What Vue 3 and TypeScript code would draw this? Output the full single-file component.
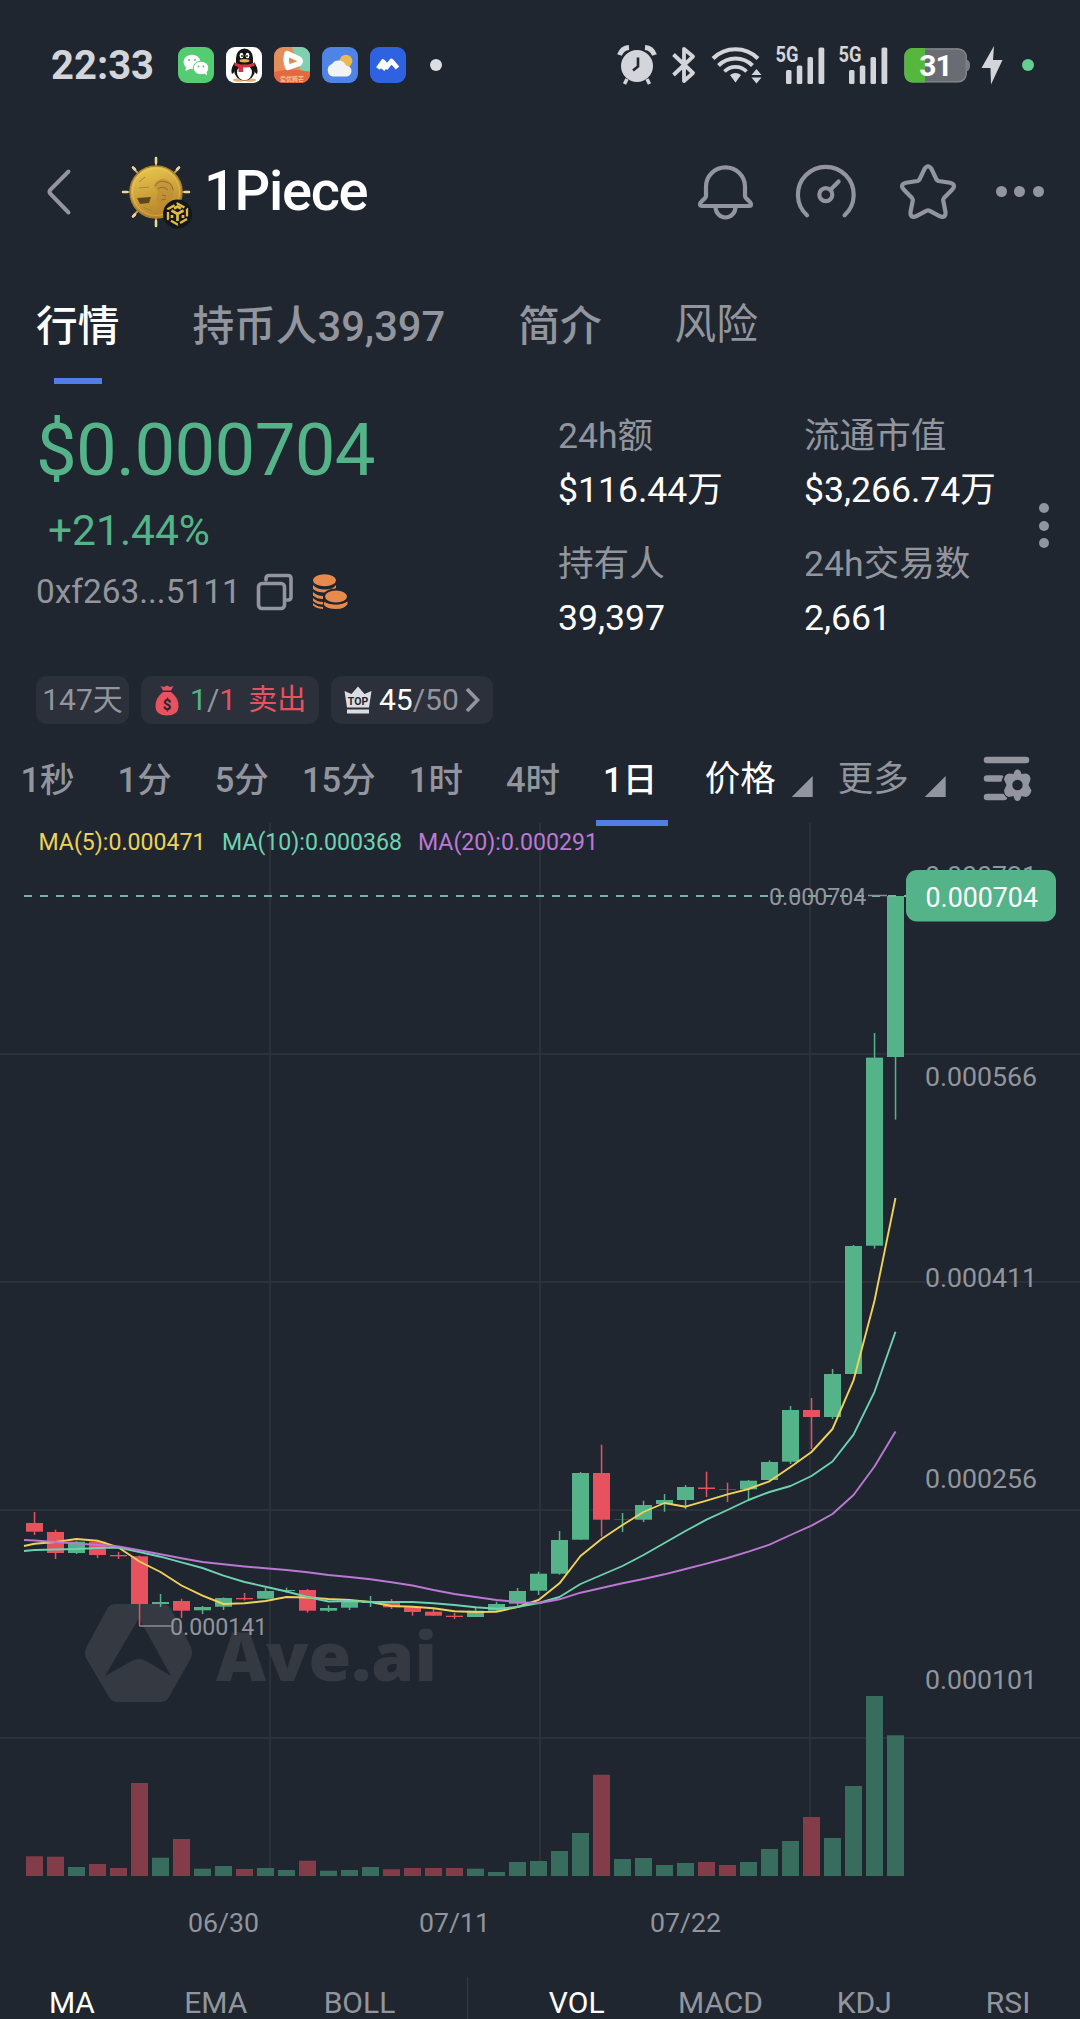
<template>
  <div class="page">
    <!-- 系统状态栏 -->
    <div class="status-bar">
      <span class="clock">22:33</span>
      <div class="app-icons">
        <svg viewBox="0 0 36 36">
          <rect width="36" height="36" rx="9" fill="#54cc71" />
          <ellipse cx="14" cy="15" rx="8.5" ry="7.3" fill="#fff" />
          <path d="M8 19 L7.5 24 L13 21.500Z" fill="#fff" />
          <ellipse cx="23" cy="21" rx="7.8" ry="6.800" fill="#fff" stroke="#54cc71" stroke-width="1" />
          <path d="M26 26 L29 28.500 L28.500 24Z" fill="#fff" />
          <g fill="#54cc71">
            <circle cx="11" cy="13" r="1.100" />
            <circle cx="17" cy="13" r="1.100" />
            <circle cx="20.500" cy="19.500" r="1" />
            <circle cx="25.500" cy="19.500" r="1" />
          </g>
        </svg>
        <svg viewBox="0 0 36 36">
          <rect width="36" height="36" rx="9" fill="#fff" />
          <ellipse cx="13" cy="33" rx="6" ry="1.800" fill="#e5b070" />
          <ellipse cx="24" cy="33" rx="6" ry="1.800" fill="#e5b070" />
          <path d="M9 15 Q4 22 6 27 Q8 26 9 23Z M28 15 Q33 22 31 27 Q29 26 28 23Z" fill="#151515" />
          <ellipse cx="18.500" cy="23" rx="10.500" ry="10.500" fill="#151515" />
          <ellipse cx="18.500" cy="25.500" rx="7.500" ry="7.800" fill="#fff" />
          <path d="M10 16 V11 a8.500 9.500 0 0 1 17 0 V16Z" fill="#151515" />
          <ellipse cx="15.500" cy="8.500" rx="1.900" ry="2.700" fill="#fff" />
          <ellipse cx="21.500" cy="8.500" rx="1.900" ry="2.700" fill="#fff" />
          <circle cx="16" cy="9" r="0.900" fill="#151515" />
          <circle cx="21" cy="9" r="0.900" fill="#151515" />
          <ellipse cx="18.500" cy="13.700" rx="5" ry="1.700" fill="#e6ad55" />
          <path d="M8.500 15.500 Q18.500 20 28.500 15.500 V19 Q22 21 17 20.500 V25 H12.500 V20 L8.500 18.500Z" fill="#d4343f" />
        </svg>
        <svg viewBox="0 0 36 36">
          <rect width="36" height="36" rx="9" fill="#e48f59" />
          <path d="M18 0 H27 a9 9 0 0 1 9 9 V24 H27 Z" fill="#7ed0b0" />
          <path d="M0 25 Q18 20 36 25 V27 a9 9 0 0 1 -9 9 H9 a9 9 0 0 1 -9 -9Z" fill="#e56840" />
          <path d="M13 6.500 L25 12 Q27.500 14 25 16.500 L14 20.500 Q11 14 13 6.500Z" fill="#e08a4b" stroke="#fff" stroke-width="5.500" stroke-linejoin="round" />
          <text x="18" y="33.500" class="mini-text">爱优腾芒</text>
        </svg>
        <svg viewBox="0 0 36 36">
          <rect width="36" height="36" rx="9" fill="#4f83e6" />
          <circle cx="24" cy="14" r="6.300" fill="#eab951" />
          <path d="M11 29.500 a6.500 6.500 0 0 1 -1 -12.500 a8 8 0 0 1 14 1.500 a5.500 5.500 0 0 1 0 11Z" fill="#f2f3f5" />
        </svg>
        <svg viewBox="0 0 36 36">
          <rect width="36" height="36" rx="9" fill="#2f62e0" />
          <path d="M8 21.500 L13 14.500 L16 18 L12.500 22.500 M15.500 21.500 L21.500 14 L27.500 21" fill="none" stroke="#fff" stroke-width="4.600" stroke-linejoin="round" />
        </svg>
      </div>
      <span class="dot"></span>
      <div class="sys-icons">
        <svg class="alarm" viewBox="0 0 38 40">
          <circle cx="19" cy="21" r="16" fill="#d3d5da" />
          <path d="M1.500 10 Q4 3 11 2.500 M36.500 10 Q34 3 27 2.500" fill="none" stroke="#d3d5da" stroke-width="5" />
          <path d="M9 34 L6.500 39 M29 34 L31.500 39" stroke="#d3d5da" stroke-width="3.500" />
          <path d="M20 12.500 V21.500 L15 25.500" fill="none" stroke="#20262f" stroke-width="2.600" />
        </svg>
        <svg class="bluetooth" viewBox="0 0 24 40">
          <path d="M1.500 9.500 L21 28 L12 36 V4 L21 11.500 L1.500 30" fill="none" stroke="#d3d5da" stroke-width="3.800" stroke-linejoin="round" />
        </svg>
        <svg class="wifi" viewBox="0 0 52 40">
          <path d="M2 13.500 A32 32 0 0 1 47 13.500 M7.500 20.500 A24 24 0 0 1 41.500 20.500 M13.500 26.500 A15.500 15.500 0 0 1 35.500 26.500" fill="none" stroke="#d3d5da" stroke-width="3.900" />
          <path d="M19 30 Q24.500 26 30 30 L24.500 37.500Z" fill="#d3d5da" />
          <path d="M40.500 30 L45.500 24 L50.500 30Z M40.500 32.500 L45.500 38.500 L50.500 32.500Z" fill="#d3d5da" />
        </svg>
        <svg v-for="n in 2" :key="n" class="signal" viewBox="0 0 50 40">
          <text x="-0.500" y="17" class="net-text" textLength="23" lengthAdjust="spacingAndGlyphs">5G</text>
          <g fill="#d3d5da">
            <rect x="10" y="25" width="5.500" height="14" rx="1.500" />
            <rect x="20.800" y="20.500" width="5.500" height="18.500" rx="1.500" />
            <rect x="31.500" y="12" width="5.500" height="27" rx="1.500" />
            <rect x="42.500" y="2.500" width="5.800" height="36.500" rx="1.500" />
          </g>
        </svg>
        <svg class="battery" viewBox="0 0 67 36">
          <rect x="0.800" y="1.800" width="61.500" height="33" rx="8" fill="#6a6c74" stroke="#8b8d94" stroke-width="1.200" />
          <path d="M21 1 V35.500 H8.500 a8 8 0 0 1 -8 -8 V9 a8 8 0 0 1 8 -8Z" fill="#55b83c" />
          <path d="M62.500 12.500 q3.500 1 3.500 6 t-3.500 6Z" fill="#7b7d84" />
          <text x="31.500" y="29" class="battery-text">31</text>
        </svg>
        <svg class="bolt" viewBox="0 0 22 40">
          <path d="M13 1 L0.500 23 H9.500 L10 39.500 L21.500 15 H12Z" fill="#d3d5da" />
        </svg>
        <span class="dot green"></span>
      </div>
    </div>

    <!-- 标题栏 -->
    <header class="header">
      <svg class="back" viewBox="0 0 26 46">
        <path d="M22.500 2.500 L4.500 20.500 Q2.500 22.800 4.500 25 L22.500 43.500" fill="none" stroke="#92959d" stroke-width="4" stroke-linecap="round" />
      </svg>
      <svg class="coin" viewBox="0 0 72 74">
        <defs>
          <linearGradient id="gold" x1="0" y1="0" x2="0.300" y2="1">
            <stop offset="0" stop-color="#ebcd50" />
            <stop offset="1" stop-color="#b9862b" />
          </linearGradient>
        </defs>
        <path d="M35 4 V70 M3 37 H67 M13 14 L57 60 M57 14 L13 60" stroke="#c79d4a" stroke-width="2" />
        <path d="M35 3 V8 M35 66 V71 M2 37 H6 M64 37 H68 M12 12.500 L14 14.500 M58 12.500 L56 14.500 M12 61.500 L14 59.500" stroke="#e8d8a4" stroke-width="2.600" stroke-linecap="round" />
        <circle cx="35" cy="37" r="26" fill="url(#gold)" stroke="#a97f31" stroke-width="1.500" />
        <circle cx="35" cy="37" r="23.500" fill="none" stroke="#f0d77a" stroke-width="0.800" opacity="0.500" />
        <path d="M33 30 Q38 21 47 25 Q55 30 52 42 L47 47 L50 53 L34 60 L38 51 L35 44 L37 37Z" fill="#b98837" opacity="0.550" />
        <path d="M34 31 Q38 24 45 27 Q51 28 52 35 M37 34 q5 -4 10 1 M41 40 l4 1 M40 45 l5 -1" fill="none" stroke="#84602a" stroke-width="1" opacity="0.800" />
        <path d="M16 43 L30 42 L28 48 L19 49Z" fill="#5f461f" />
        <path d="M18 27 l6 -5 M18 33 l10 -1 M22 52 l9 4" fill="none" stroke="#aa8335" stroke-width="1" />
        <circle cx="56.500" cy="59" r="14.500" fill="#13161b" />
        <path d="M56.500 48.500 L66 54 V64 L56.500 69.500 L47 64 V54Z" fill="none" stroke="#e3bd41" stroke-width="2.300" stroke-dasharray="8 2.500" />
        <path d="M50.500 55.500 L56.500 59 L62.500 55.500 M56.500 59 V66 M51 60 V63 M62 60 V63 M53 53.500 L56.500 51.500 L60 53.500" fill="none" stroke="#e3bd41" stroke-width="2.700" />
      </svg>
      <h1 class="title">1Piece</h1>
      <div class="actions">
        <svg class="bell" viewBox="0 0 58 60">
          <path d="M10 24.500 a19.500 19.200 0 0 1 39 0 V34 c0 3 6 5 6 8.500 q0 1.500 -2 1.500 H6 q-2 0 -2 -1.500 c0 -3.500 6 -5.500 6 -8.500Z" />
          <path d="M19.500 45 a10 10.500 0 0 0 20 0" />
        </svg>
        <svg class="gauge" viewBox="0 0 64 60">
          <path d="M13 53.300 A27.900 27.900 0 1 1 50.600 53.300" />
          <circle cx="31.800" cy="32.700" r="6.500" />
          <path d="M37 27.300 L44.600 19.600" />
        </svg>
        <svg class="star" viewBox="0 0 60 60">
          <path d="M26.500 7 Q30 1.500 33.500 7 L38.500 17.500 Q39 18.500 40.500 19 L52 20.800 Q58.500 22.500 54.300 27.500 L46 36 Q45 37.200 45.200 38.500 L47.500 50 Q47.800 56.500 42 54.300 L31.300 48.600 Q30 48 28.700 48.600 L18 54.300 Q12.200 56.500 12.500 50 L14.800 38.500 Q15 37.200 14 36 L5.700 27.500 Q1.500 22.500 8 20.800 L19.500 19 Q21 18.500 21.500 17.500Z" />
        </svg>
        <div class="more">
          <i></i>
          <i></i>
          <i></i>
        </div>
      </div>
    </header>

    <nav class="tabs">
      <span
        v-for="(tab, index) in tabs"
        :key="tab"
        class="tab"
        :class="{ active: index === 0, light: index === 3 }"
      >{{ tab }}</span>
    </nav>

    <!-- 价格概览 -->
    <section class="summary">
      <div class="quote">
        <div class="price">$0.000704</div>
        <div class="change">+21.44%</div>
        <div class="address">
          <span class="hash">0xf263...5111</span>
          <svg class="copy" viewBox="0 0 38 38">
            <rect x="2.500" y="10.500" width="26" height="25" rx="3.500" />
            <path d="M10 7 V5.500 q0 -3 3 -3 H32 q3 0 3 3 V24 q0 3 -3 3 H31" />
          </svg>
          <svg class="stack" viewBox="0 0 35 35">
            <g fill="#e78b4d">
              <path d="M0 11 Q4 15.500 12 15.500 Q20 15.500 23 11 V14 Q18 18.500 12 18.500 Q4 18.500 0 15Z" />
              <path d="M0 18 Q4 22 10 22 V25 Q4 25 0 21.500Z" />
              <path d="M0 24 Q4 28 10 28 V30.500 Q4 30.500 0 27Z M0 29 Q4 33 10 33 V35 Q3 34.500 0 31.500Z" />
              <ellipse cx="11.500" cy="6.300" rx="11.500" ry="6" />
              <path d="M11 28 Q16 30.500 23 30.500 Q30 30.500 34.500 27.500 V30 Q32 35 23 35 Q14 35 11 31Z" />
              <ellipse cx="23" cy="22.500" rx="13" ry="8" fill="#20262f" />
              <ellipse cx="23" cy="22.500" rx="11" ry="6" />
            </g>
          </svg>
        </div>
      </div>
      <div class="stats">
        <div v-for="stat in stats" :key="stat.label" class="stat">
          <span class="stat-label">{{ stat.label }}</span>
          <span class="stat-value">{{ stat.value }}</span>
        </div>
      </div>
      <div class="more vertical">
        <i></i>
        <i></i>
        <i></i>
      </div>
    </section>

    <div class="chips">
      <div class="chip age">147天</div>
      <div class="chip trades">
        <svg class="bag" viewBox="0 0 24 31">
          <path d="M5.500 1 L9 2 L12 0.500 L15 2 L18.500 1 L16 5.500 H8Z" fill="#e8525e" />
          <path d="M8 7 H16 Q24 13 23.500 22 Q23 30.500 12 30.500 Q1 30.500 0.500 22 Q0 13 8 7Z" fill="#e8525e" />
          <text x="12" y="24.500" class="bag-text">$</text>
        </svg>
        <span><b class="up">1</b>/<b class="down">1</b></span>
        <span class="down">卖出</span>
      </div>
      <div class="chip rank">
        <svg class="crown" viewBox="0 0 28 28">
          <path d="M0.500 5 L7.500 8 L14 0.500 L20.500 8 L27.500 5 L25 21.500 H3Z M3 23.500 H25 V27.500 H3Z" fill="#dcdde1" />
          <text x="14" y="18.500" class="crown-text">TOP</text>
        </svg>
        <span><b class="white">45</b>/50</span>
        <svg class="arrow" viewBox="0 0 15 26">
          <path d="M2 2 L12.500 13 L2 24" fill="none" stroke="#92959d" stroke-width="3.600" />
        </svg>
      </div>
    </div>

    <!-- 周期选择 -->
    <div class="periods">
      <span
        v-for="period in periods"
        :key="period"
        class="period"
        :class="{ active: period === '1日' }"
      >{{ period }}</span>
      <span class="dropdown white">价格<i class="corner"></i></span>
      <span class="dropdown">更多<i class="corner"></i></span>
      <svg class="settings" viewBox="0 0 50 46">
        <g stroke="#92959d" stroke-width="6.500" stroke-linecap="round">
          <path d="M4 4 H43 M4 22.500 H18 M4 41 H21" />
        </g>
        <circle cx="34.500" cy="29" r="16.500" fill="#20262f" />
        <path d="M34.500 13.500 Q37.500 13.500 38.500 18 L43 17.500 Q47.500 18.500 47.500 23.500 L45.500 29 L48.500 34.500 Q47 40 43 41 L38.500 40 Q37.500 45 34.500 45 Q31.500 45 30.500 40 L26 41 Q21.500 40 21 34.500 L23.500 29 L21 23.500 Q21.500 18.500 26 17.500 L30.500 18 Q31.500 13.500 34.500 13.500Z" fill="#92959d" />
        <circle cx="34.500" cy="29" r="5.200" fill="#20262f" />
      </svg>
    </div>

    <!-- K 线图 -->
    <svg class="chart" viewBox="0 823 1080 1137">
      <g class="grid">
        <line v-for="x in gridX" :key="x" :x1="x" :x2="x" y1="823" y2="1876" />
        <line v-for="y in gridY" :key="y" x1="0" x2="1080" :y1="y" :y2="y" />
      </g>

      <g class="watermark">
        <path d="M116 1604 H163 Q168 1604 171 1609 L191 1647 Q193 1653 191 1658 L169 1697 Q166 1702 161 1702 H118 Q112 1702 109 1697 L86 1658 Q84 1653 86 1648 L107 1609 Q110 1604 116 1604Z" />
        <path d="M139 1618 L171 1676 L148 1662 Q139 1656 130 1662 L105 1676Z" class="watermark-hole" />
        <text x="216" y="1680.500" textLength="221" lengthAdjust="spacingAndGlyphs">Ave.ai</text>
      </g>

      <rect
        v-for="bar in bars"
        :key="`v${bar.x}`"
        :x="bar.x - 8.500"
        :y="bar.volume"
        width="17"
        :height="1876 - bar.volume"
        :fill="bar.up ? '#386d5e' : '#833d48'"
      />
      <g v-for="bar in bars" :key="`k${bar.x}`" :fill="bar.up ? '#55b389' : '#e8525e'">
        <rect :x="bar.x - 0.700" :y="bar.high" width="1.500" :height="bar.low - bar.high" />
        <rect :x="bar.x - 8.500" :y="bar.top" width="17" :height="bar.bottom - bar.top" />
      </g>

      <polyline v-for="line in averages" :key="line.color" :points="line.points" :stroke="line.color" class="average" />

      <line x1="24" x2="906" y1="896" y2="896" class="last-price" />
      <path d="M868 895.500 H887 M139.500 1626 H171" stroke="#8a8d95" stroke-width="1.500" />
      <g class="mark">
        <text x="769" y="905">0.000704</text>
        <text x="170" y="1634.500">0.000141</text>
      </g>

      <g class="legend">
        <text x="38.500" y="850" fill="#ecd35c">MA(5):0.000471</text>
        <text x="222" y="850" fill="#6ed3b3">MA(10):0.000368</text>
        <text x="418" y="850" fill="#bd79d6">MA(20):0.000291</text>
      </g>

      <g class="axis">
        <text v-for="(label, index) in priceLabels" :key="label" x="925" :y="885 + index * 201">{{ label }}</text>
        <text v-for="date in dates" :key="date.label" :x="date.x" y="1932" text-anchor="middle">{{ date.label }}</text>
      </g>
      <rect x="906" y="870" width="150" height="51.500" rx="11" fill="#55b389" />
      <text x="925.500" y="907" class="tag-text">0.000704</text>
    </svg>

    <!-- 指标 -->
    <div class="indicators">
      <div class="group">
        <span v-for="name in mainIndicators" :key="name" :class="{ white: name === 'MA' }">{{ name }}</span>
      </div>
      <div class="divider"></div>
      <div class="group">
        <span v-for="name in subIndicators" :key="name" :class="{ white: name === 'VOL' }">{{ name }}</span>
      </div>
    </div>
  </div>
</template>

<script setup lang="ts">
import { computed } from 'vue';

interface Stat {
  label: string;
  value: string;
}

// [实体上沿, 实体下沿, 最高, 最低, 是否上涨, 成交量上沿]
type Candle = [number, number, number, number, 0 | 1, number];

const tabs = ['行情', '持币人39,397', '简介', '风险'];
const periods = ['1秒', '1分', '5分', '15分', '1时', '4时', '1日'];
const mainIndicators = ['MA', 'EMA', 'BOLL'];
const subIndicators = ['VOL', 'MACD', 'KDJ', 'RSI'];

const stats: Stat[] = [
  { label: '24h额', value: '$116.44万' },
  { label: '流通市值', value: '$3,266.74万' },
  { label: '持有人', value: '39,397' },
  { label: '24h交易数', value: '2,661' }
];

const gridX = [270, 540, 810];
const gridY = [1054, 1282, 1510, 1738];
const priceLabels = ['0.000721', '0.000566', '0.000411', '0.000256', '0.000101'];
const dates = [
  { label: '06/30', x: 223.5 },
  { label: '07/11', x: 454.5 },
  { label: '07/22', x: 685.5 }
];

const candles: Candle[] = [
  [1523, 1531.7, 1512, 1535, 0, 1856.3],
  [1532, 1553, 1529.7, 1559, 0, 1856.7],
  [1541.7, 1553, 1541, 1554, 1, 1867],
  [1541.7, 1555, 1540, 1558, 0, 1864],
  [1555, 1556.3, 1552, 1559, 0, 1868],
  [1556.3, 1604, 1555.5, 1626, 0, 1783],
  [1602, 1604, 1594, 1607, 1, 1857.7],
  [1601, 1610.7, 1598.7, 1618, 0, 1839],
  [1607, 1610.3, 1606, 1614, 1, 1868.7],
  [1598, 1606.7, 1597.5, 1610, 1, 1866],
  [1598, 1599.3, 1593, 1600.5, 0, 1869],
  [1591, 1598.7, 1588, 1599, 1, 1868],
  [1590, 1591, 1587.7, 1592.7, 1, 1870],
  [1590, 1610.7, 1589, 1612.7, 0, 1860.7],
  [1608, 1610.7, 1605.3, 1612, 1, 1870.7],
  [1602, 1607.7, 1601, 1610, 1, 1870],
  [1602, 1603, 1596, 1607, 1, 1867],
  [1602.3, 1607.3, 1599, 1609, 0, 1869.3],
  [1607.3, 1612, 1606, 1615.7, 0, 1868],
  [1611.7, 1615.7, 1609, 1616, 0, 1868],
  [1615.7, 1617, 1613, 1619, 0, 1868],
  [1610.7, 1617, 1606.7, 1617, 1, 1868.7],
  [1604, 1610.7, 1601.7, 1611.7, 1, 1872],
  [1591, 1603.7, 1588, 1607, 1, 1862],
  [1573.7, 1590.7, 1571.7, 1595, 1, 1861],
  [1540, 1573.7, 1531, 1574.7, 1, 1851],
  [1473, 1539.7, 1472, 1540, 1, 1833],
  [1473, 1519.7, 1444.7, 1536.7, 0, 1774.7],
  [1519.6, 1519.9, 1513, 1532, 1, 1859],
  [1505, 1519.7, 1500.7, 1522, 1, 1858],
  [1500, 1504, 1494, 1511.7, 1, 1865],
  [1487, 1500, 1485, 1509, 1, 1863],
  [1487.5, 1489, 1471.7, 1497, 0, 1862],
  [1489.3, 1489.8, 1482.7, 1502, 0, 1865],
  [1480.7, 1489.3, 1480, 1500, 1, 1862],
  [1462, 1480, 1460.3, 1481.3, 1, 1849],
  [1410, 1461.7, 1406, 1464, 1, 1841],
  [1410, 1417, 1398, 1449, 0, 1817],
  [1374, 1417, 1369, 1419, 1, 1838],
  [1246, 1374, 1245, 1374, 1, 1786],
  [1057.6, 1245.7, 1033, 1248.6, 1, 1696],
  [896, 1057, 896, 1119.6, 1, 1735.3]
];

const candleX = (index: number) => 34.5 + index * 21;

const bars = computed(() =>
  candles.map(([top, bottom, high, low, up, volume], index) => ({
    x: candleX(index),
    top,
    bottom,
    high,
    low,
    up: up === 1,
    volume
  }))
);

const ma5 = [
  1543.7, 1542, 1539, 1540.7, 1547.5, 1561.5, 1572, 1585.5, 1595.7, 1604, 1603.3, 1601, 1597, 1597.5,
  1599, 1600, 1602, 1606, 1606.7, 1608.3, 1611.3, 1612, 1611.7, 1607, 1600, 1583.3, 1556, 1539,
  1525, 1512, 1503, 1506.7, 1500.7, 1494.3, 1489, 1481.3, 1467, 1452, 1429, 1380.4, 1300.8, 1198
];
const ma10 = [
  1550, 1549.5, 1549, 1548, 1547.5, 1552, 1556.7, 1562.3, 1568, 1575.7, 1582, 1586.7, 1591.5, 1597,
  1601.5, 1601, 1602, 1602, 1602, 1603.3, 1605, 1607.3, 1608.7, 1607, 1603, 1597, 1584, 1575,
  1566, 1555, 1543, 1531, 1519.7, 1510, 1500, 1492, 1486, 1476, 1461.5, 1434.7, 1391.8, 1331.8
];
const ma20 = [
  1540.5, 1542, 1543.5, 1545, 1546.5, 1550.3, 1554.3, 1558.3, 1562, 1564.3, 1566.5, 1568.3, 1570, 1572.3,
  1575, 1577, 1579.3, 1582.3, 1585.5, 1590, 1594, 1597, 1600, 1602, 1603.3, 1599.3, 1592.7, 1588,
  1583.3, 1579, 1574.3, 1569, 1563.7, 1558, 1551.7, 1544.7, 1535, 1525.7, 1514, 1495, 1466.5, 1431.4
];

const toPoints = (start: number, values: number[]) =>
  [`24,${start}`, ...values.map((y, index) => `${candleX(index)},${y}`)].join(' ');

const averages = computed(() => [
  { color: '#f0d15a', points: toPoints(1546, ma5) },
  { color: '#6dd2b1', points: toPoints(1551, ma10) },
  { color: '#ba78d3', points: toPoints(1540, ma20) }
]);
</script>

<style scoped>
.page {
  width: 1080px;
  height: 2019px;
  overflow: hidden;
  display: flex;
  flex-direction: column;
  background: #20262f;
  color: #92959d;
  font-family: Roboto, "Noto Sans CJK SC", sans-serif;
}

svg {
  display: block;
  flex: none;
  overflow: visible;
}

b {
  font-weight: 400;
}

.white {
  color: #fff;
}

.up {
  color: #55b389;
}

.down {
  color: #e8525e;
}

.status-bar {
  flex: none;
  height: 130px;
  padding: 0 46px 0 51px;
  display: flex;
  align-items: center;
}

.clock {
  width: 127px;
  color: #d3d5da;
  font-size: 40px;
  font-weight: 700;
}

.app-icons {
  display: flex;
  gap: 12px;
}

.app-icons svg {
  width: 36px;
  height: 36px;
}

.mini-text {
  fill: #f6c18f;
  font-size: 6px;
  font-weight: 700;
  text-anchor: middle;
}

.dot {
  width: 12px;
  height: 12px;
  margin-left: 24px;
  border-radius: 50%;
  background: #dcdde1;
}

.dot.green {
  margin-left: 19px;
  background: #65cf91;
}

.sys-icons {
  margin-left: auto;
  display: flex;
  align-items: center;
}

.alarm {
  width: 38px;
  height: 40px;
}

.bluetooth {
  width: 24px;
  height: 40px;
  margin-left: 16px;
}

.wifi {
  width: 52px;
  height: 40px;
  margin-left: 15px;
}

.signal {
  width: 50px;
  height: 40px;
  margin-left: 13px;
}

.net-text {
  fill: #d3d5da;
  font-size: 21.5px;
  font-weight: 700;
}

.battery {
  width: 67px;
  height: 36px;
  margin-left: 15px;
}

.battery-text {
  fill: #fff;
  font-size: 30px;
  font-weight: 700;
  text-anchor: middle;
  letter-spacing: -1px;
}

.bolt {
  width: 22px;
  height: 40px;
  margin-left: 10px;
}

.header {
  flex: none;
  height: 122px;
  padding: 0 36px 0 46px;
  display: flex;
  align-items: center;
}

.back {
  width: 26px;
  height: 46px;
  margin-top: 1px;
}

.coin {
  width: 72px;
  height: 74px;
  margin: 1px 0 0 49px;
}

.title {
  margin: 0 0 0 11px;
  color: #fff;
  font-size: 56px;
  font-weight: 500;
  line-height: 60px;
  letter-spacing: -1.3px;
}

.actions {
  margin-left: auto;
  display: flex;
  align-items: center;
}

.actions svg,
.copy {
  fill: none;
  stroke: #92959d;
  stroke-width: 4.2;
  stroke-linecap: round;
  stroke-linejoin: round;
}

.actions svg {
  margin-top: 2px;
}

.bell {
  width: 58px;
  height: 60px;
}

.gauge {
  width: 64px;
  height: 60px;
  margin-left: 40px;
}

.star {
  width: 60px;
  height: 60px;
  margin-left: 40px;
}

.more {
  margin-left: 38px;
  display: flex;
  gap: 7.6px;
}

.more i {
  width: 11px;
  height: 11px;
  border-radius: 50%;
  background: #92959d;
}

.tabs {
  flex: none;
  height: 132px;
  padding-left: 36px;
  display: flex;
  gap: 73px;
}

.tab {
  position: relative;
  font-size: 41.7px;
  font-weight: 500;
  line-height: 150px;
}

.tab.light {
  font-weight: 400;
  line-height: 146px;
}

.tab.active {
  color: #fff;
}

.tab.active::after {
  content: '';
  position: absolute;
  left: 18px;
  bottom: 0;
  width: 48px;
  height: 6px;
  background: #507ee4;
}

.summary {
  flex: none;
  height: 292px;
  display: flex;
}

.quote {
  box-sizing: border-box;
  width: 558px;
  padding: 27px 0 0 36px;
}

.price {
  color: #55b389;
  font-size: 72.5px;
  line-height: 80px;
  letter-spacing: -0.7px;
}

.change {
  padding-left: 12px;
  color: #55b389;
  font-size: 42.5px;
  line-height: 79px;
}

.address {
  height: 44px;
  display: flex;
  align-items: center;
}

.hash {
  width: 203px;
  font-size: 33.4px;
  line-height: 44px;
}

.copy {
  width: 38px;
  height: 38px;
  margin-left: 17px;
  stroke-width: 3.6;
}

.stack {
  width: 35px;
  height: 35px;
  margin: -2px 0 0 19px;
}

.stats {
  width: 475px;
  padding-top: 24px;
  display: grid;
  grid-template-columns: 246px 1fr;
  grid-auto-rows: 128px;
}

.stat {
  display: flex;
  flex-direction: column;
}

.stat-label {
  font-size: 35.6px;
  line-height: 56px;
}

.stat-value {
  color: #fff;
  font-size: 35.6px;
  line-height: 53px;
}

.more.vertical {
  height: 45px;
  margin: 119px 0 0 5.5px;
  flex-direction: column;
  gap: 7.5px;
}

.more.vertical i {
  width: 10px;
  height: 10px;
}

.chips {
  flex: none;
  height: 48px;
  padding-left: 36px;
  display: flex;
  gap: 12px;
}

.chip {
  box-sizing: border-box;
  height: 48px;
  display: flex;
  align-items: center;
  border-radius: 11px;
  background: #2b303a;
  font-size: 30px;
  line-height: 48px;
}

.age {
  width: 93px;
  justify-content: center;
}

.trades {
  width: 178px;
  padding-left: 14px;
}

.trades span {
  margin-left: 11px;
}

.trades span.down {
  margin-left: 12px;
  font-size: 29px;
}

.bag {
  width: 24px;
  height: 31px;
}

.bag-text {
  fill: #20262f;
  font-size: 15px;
  font-weight: 700;
  text-anchor: middle;
}

.rank {
  width: 162px;
  padding-left: 13px;
}

.rank span {
  margin: 0 6px 0 7px;
}

.crown {
  width: 28px;
  height: 28px;
}

.crown-text {
  fill: #20262f;
  font-size: 10.5px;
  font-weight: 700;
  text-anchor: middle;
}

.arrow {
  width: 15px;
  height: 26px;
}

.periods {
  flex: none;
  height: 99px;
  display: flex;
}

.period {
  position: relative;
  width: 97.1px;
  left: -1px;
  text-align: center;
  font-size: 34.5px;
  font-weight: 500;
  line-height: 112px;
}

.period.active {
  color: #fff;
}

.period.active::after {
  content: '';
  position: absolute;
  left: 14px;
  bottom: -3px;
  width: 72px;
  height: 6px;
  background: #507ee4;
}

.dropdown {
  display: flex;
  margin-left: 25px;
  font-size: 35.5px;
  line-height: 110px;
}

.corner {
  width: 21px;
  height: 21px;
  margin: 52px 0 0 16px;
  background: #92959d;
  clip-path: polygon(100% 0, 100% 100%, 0 100%);
}

.settings {
  width: 50px;
  height: 46px;
  margin: 32px 0 0 37px;
}

.chart {
  position: relative;
  width: 1080px;
  height: 1137px;
}

.grid line {
  stroke: #30343d;
  stroke-width: 1.5;
}

.watermark {
  fill: #353941;
  font-family: "Open Sans", sans-serif;
  font-size: 68px;
  font-weight: 800;
}

.watermark-hole {
  fill: #20262f;
}

.average {
  fill: none;
  stroke-width: 1.9;
  stroke-linejoin: round;
}

.last-price {
  stroke: #76b5a4;
  stroke-width: 1.8;
  stroke-dasharray: 8 8;
}

.mark {
  fill: #92959d;
  font-size: 23.2px;
}

.legend {
  font-size: 23.1px;
}

.axis {
  fill: #92959d;
  font-size: 26.7px;
}

.tag-text {
  fill: #fff;
  font-size: 26.8px;
}

.indicators {
  flex: none;
  height: 84px;
  display: flex;
}

.group {
  display: grid;
  grid-auto-flow: column;
  grid-auto-columns: 143.8px;
  text-align: center;
  font-size: 30px;
  line-height: 86px;
}

.divider {
  width: 1.5px;
  margin: 17px 36.5px 0 36px;
  background: #343943;
}
</style>

<style>
body {
  margin: 0;
  background: #20262f;
}
</style>
